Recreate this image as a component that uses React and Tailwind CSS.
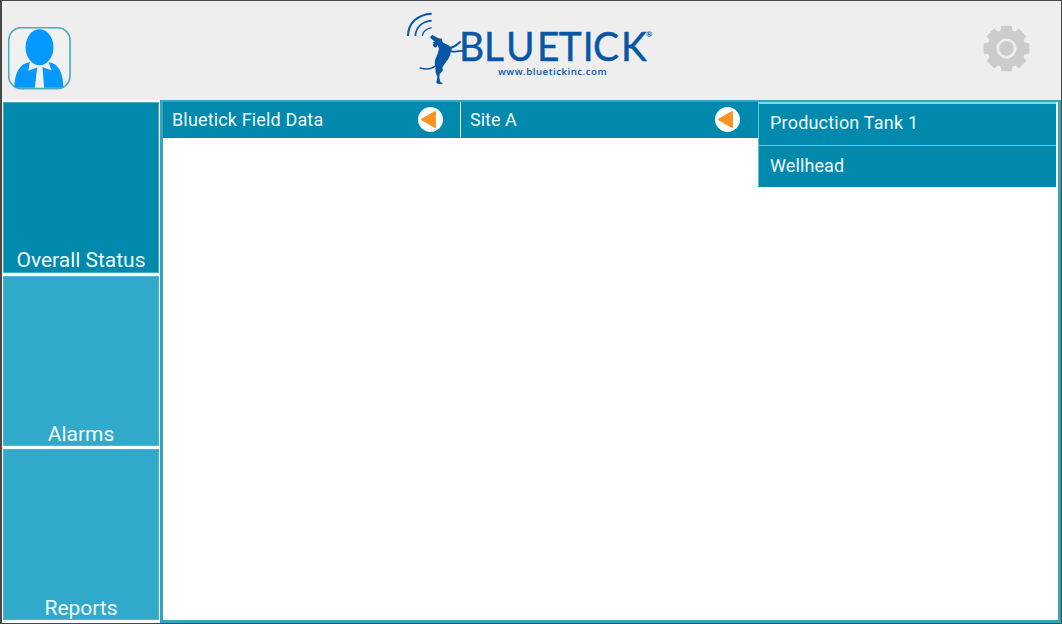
import React from 'react';

function UserIcon() {
  return (
    <svg viewBox="0 0 190 190" className="block h-[63px] w-[63px]">
      <rect x="2" y="2" width="185" height="184" rx="38" fill="#f0f1f1" stroke="#4eabbc" strokeWidth="5" />
      <ellipse cx="95" cy="61" rx="42" ry="54" fill="#0499ff" />
      <path d="M19 181 C20 139 35 109 66 106 L61 132 L88 122 L81 183 L34 183 Q25 183 19 181Z" fill="#0499ff" />
      <path d="M167 181 C166 139 153 109 122 106 L132 131 L104 121 L109 183 L155 183 Q162 183 167 181Z" fill="#0499ff" />
    </svg>
  );
}

function Logo() {
  return (
    <svg viewBox="0 0 840 300" className="block h-[100px] w-[280px]" fill="#0857a6">
      <g fill="none" stroke="#0857a6">
        <path d="M39 108 C39 68 70 43 110 41" strokeWidth="6" />
        <path d="M61 108 C63 81 82 64 110 62" strokeWidth="5" />
        <path d="M82 108 C84 94 94 86 110 83" strokeWidth="3.5" />
        <path d="M128 188 C119 206 98 210 75 204" strokeWidth="4" strokeLinecap="round" />
        <path d="M160 145 C179 143 183 136 195 126" strokeWidth="6" strokeLinecap="round" />
        <path d="M158 153 C177 159 187 151 204 153" strokeWidth="5" strokeLinecap="round" />
      </g>
      <path d="M106 110 L111 105 L131 115 L141 116 C139 121 142 127 151 131 Q163 135 169 143 Q173 150 167 156 Q166 171 153 186 Q145 197 142 203 L144 211 L134 223 L133 233 L136 246 L143 249 L141 252 L128 251 L124 248 L127 230 L122 218 L121 200 Q117 192 121 178 Q129 160 132 146 L128 135 L123 143 Q116 143 113 136 L116 130 L112 126 L120 125 L106 114Z" />
      <g transform="scale(0.94 1)">
        <text x="204 284 354 453 523 599 632 721" y="183" fontFamily="Lato, 'Liberation Sans', sans-serif" fontSize="124" stroke="#0857a6" strokeWidth="1.5">BLUETICK</text>
      </g>
      <text x="753" y="110" fontFamily="Lato, sans-serif" fontSize="23" fontWeight="700">®</text>
      <text x="309" y="224" textLength="326" fontFamily="'Open Sans', 'Noto Sans', sans-serif" fontSize="29" fontWeight="600">www.bluetickinc.com</text>
    </svg>
  );
}

function GearIcon() {
  const teeth = [0, 45, 90, 135, 180, 225, 270, 315];
  return (
    <svg viewBox="-70 -70 140 140" className="block h-[47px] w-[47px]" fill="#cccccc">
      <circle r="56" />
      {teeth.map((a) => (
        <path key={a} d="M-22 -49 L-17 -56 L-16 -68 H16 L17 -56 L22 -49Z" transform={`rotate(${a})`} />
      ))}
      <circle r="26" fill="#cccccc" stroke="#eeeeee" strokeWidth="8" />
    </svg>
  );
}

function BackIcon() {
  return (
    <svg viewBox="0 0 75 75" className="block h-[25px] w-[25px] shrink-0">
      <circle cx="37.5" cy="37.5" r="37.5" fill="#fff" />
      <path d="M9 37.5 L52 13 V62Z" fill="#f7931e" stroke="#f7931e" strokeWidth="3" strokeLinejoin="round" />
    </svg>
  );
}

function Tile({ label, active, className }) {
  return (
    <button className={`flex w-[156px] items-end justify-center border text-[21px] leading-[22px] tracking-[-0.02px] ${className} ${active ? 'border-[#4aaac2] bg-[#0088ad]' : 'border-[#54b4cd] bg-[#31a9ca]'}`}>
      <span className="whitespace-nowrap">{label}</span>
    </button>
  );
}

export default function App() {
  return (
    <div className="flex h-[624px] w-[1062px] flex-col overflow-hidden border-t border-r border-b border-l-2 border-[#48484b] bg-[#eeeeee] font-['Roboto','Liberation_Sans',sans-serif] text-[#effcff]">
      <header className="flex h-[99px] shrink-0 justify-between pr-[31px] pl-[6px]">
        <div className="w-[387px] pt-[26px]"><UserIcon /></div>
        <div className="-mt-px"><Logo /></div>
        <div className="flex flex-1 justify-end pt-[24px]"><GearIcon /></div>
      </header>
      <div className="flex min-h-0 flex-1">
        <nav className="flex w-[158px] shrink-0 flex-col gap-[3px] bg-[#f6ffff] pt-[2px] pl-px">
          <Tile label="Overall Status" active className="h-[171px] pb-px" />
          <Tile label="Alarms" className="h-[170px]" />
          <Tile label="Reports" className="h-[171px]" />
        </nav>
        <main className="flex min-w-0 flex-1 items-start border-t-2 border-r-[3px] border-b-[3px] border-l-[3px] border-[#36a4b9] bg-white">
          <div className="flex h-[36px] w-[297px] shrink-0 items-center justify-between border-b border-[#147e9f] bg-[#0088ad] pr-[17px] pl-[9px] text-[18px]">
            <span className="mb-px tracking-[0.15px]">Bluetick Field Data</span><BackIcon />
          </div>
          <div className="flex h-[36px] w-[298px] shrink-0 items-center justify-between border-b border-l border-b-[#147e9f] border-l-[#edfcff] bg-[#0088ad] pr-[18px] pl-[9px] text-[18px]">
            <span className="mb-px">Site A</span><BackIcon />
          </div>
          <div className="h-[85px] w-[298px] shrink-0 border-t-2 border-l border-t-[#7cdaeb] border-l-[#64c4d8] bg-[#0088ad] text-[18px]">
            <div className="flex h-[42px] items-center border-b border-[#66c1d4] pb-[4px] pl-[11px] tracking-[0.2px]">Production Tank 1</div>
            <div className="flex h-[41px] items-center pb-[2px] pl-[11px] tracking-[0.1px]">Wellhead</div>
          </div>
        </main>
      </div>
    </div>
  );
}
